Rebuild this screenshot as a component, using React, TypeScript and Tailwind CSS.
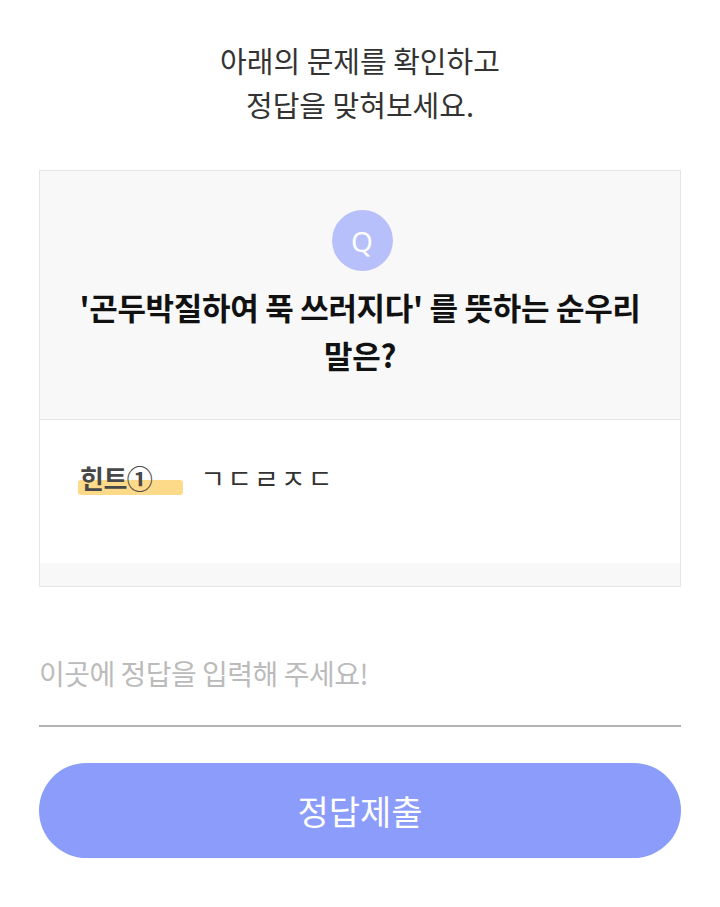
const font = "font-['Noto_Sans_CJK_KR','Noto_Sans',sans-serif]";

export default function App() {
  return (
    <div className={`${font} min-h-[907px] w-[720px] bg-white px-[39px] pt-[38px]`}>
      <p className="text-center text-[29px] leading-[44px] text-[#333]">
        아래의 문제를 확인하고
        <br />
        정답을 맞혀보세요.
      </p>

      <div className="mt-[44px] border border-[#e6e6e6]">
        <div className="flex flex-col items-center bg-[#f8f8f8] pt-[39px] pb-[40px]">
          <div className="ml-[4px] flex h-[61px] w-[61px] items-center justify-center rounded-full bg-[#b7c0fb] font-['Noto_Sans',sans-serif] text-[28px] text-white">
            Q
          </div>
          <h2 className="mt-[12px] text-center text-[31px] leading-[48px] font-bold tracking-[-0.3px] text-[#111]">
            '곤두박질하여 푹 쓰러지다' 를 뜻하는 순우리
            <br />
            말은?
          </h2>
        </div>
        <div className="h-[144px] border-t border-[#e6e6e6] bg-white pl-[40px] pt-[42px]">
          <div className="flex items-center">
            <span className="relative text-[26px] leading-[32px] font-bold tracking-[-0.5px] text-[#484848]">
              <span className="absolute left-[-2px] top-[18px] h-[15px] w-[105px] rounded-[3px] bg-[#fdd98a]" />
              <span className="relative">힌트①</span>
            </span>
            <span className="ml-[48px] text-[27px] leading-[32px] tracking-[2px] text-[#333]">
              ㄱㄷㄹㅈㄷ
            </span>
          </div>
        </div>
        <div className="h-[23px] bg-[#f8f8f8]" />
      </div>

      <input
        type="text"
        placeholder="이곳에 정답을 입력해 주세요!"
        className="mt-[34px] block h-[106px] w-full border-b-2 border-[#b3b3b3] bg-transparent text-[28px] tracking-[-0.5px] text-[#333] outline-none placeholder:text-[#bbb]"
      />

      <button
        type="button"
        className="mt-[36px] flex h-[95px] w-full items-center justify-center rounded-full bg-[#8b9cfb] text-[34px] text-white"
      >
        정답제출
      </button>
    </div>
  );
}
